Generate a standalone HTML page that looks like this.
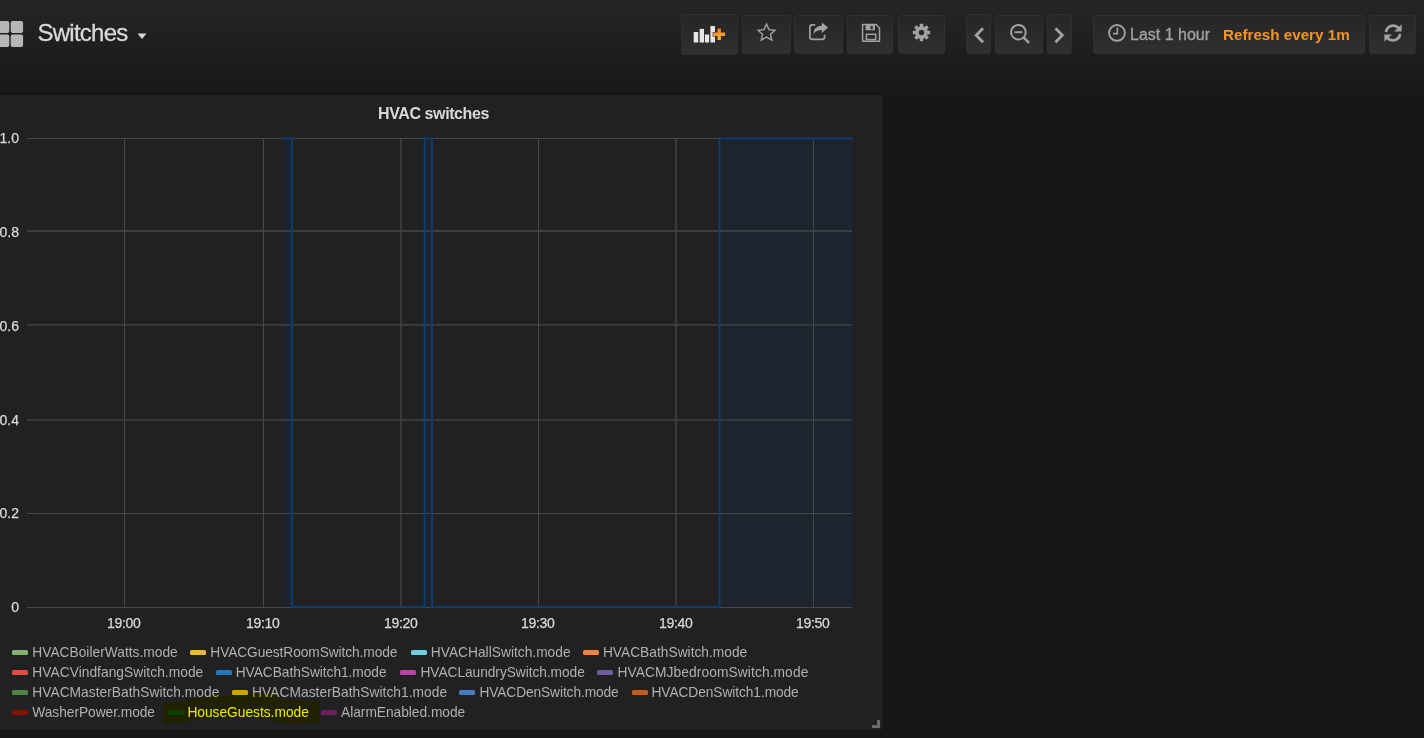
<!DOCTYPE html>
<html><head><meta charset="utf-8">
<style>
html,body{margin:0;padding:0}
body{width:1424px;height:738px;overflow:hidden;position:relative;font-family:"Liberation Sans",sans-serif;
background:linear-gradient(180deg,#222426 10px,rgb(22,23,25) 100px);}
.abs{position:absolute}
.btn{position:absolute;box-sizing:border-box;border-radius:3px;border:1px solid #2f2f32;
background:linear-gradient(to bottom,#262628,#303032);}
.t{position:absolute;white-space:nowrap;line-height:16px}
.panel{position:absolute;left:-10px;top:94px;width:894px;height:637px;box-sizing:border-box;background:#212124;
border:1px solid #141414;border-radius:3px}
.lg{position:absolute;white-space:nowrap;font-size:13.75px;line-height:16px;color:#b0b0b0}
.sw{position:absolute;width:16px;height:5px;border-radius:1.5px}
.yl{position:absolute;white-space:nowrap;line-height:16px;right:1405px;font-size:14px;color:#d8d9da;-webkit-text-stroke:0.25px #d8d9da}
.xl{position:absolute;white-space:nowrap;line-height:16px;top:614.5px;font-size:14px;letter-spacing:-0.3px;color:#d8d9da;-webkit-text-stroke:0.25px #d8d9da}
</style></head><body>
<svg class="abs" style="left:0;top:0" width="30" height="60">
  <rect x="-2" y="21" width="11.3" height="12" rx="2" fill="#b6b6b6"/>
  <rect x="10.7" y="21" width="12.4" height="12" rx="2" fill="#b6b6b6"/>
  <rect x="-2" y="34.5" width="11.3" height="12.6" rx="2" fill="#b6b6b6"/>
  <rect x="10.7" y="34.5" width="12.4" height="12.6" rx="2" fill="#b6b6b6"/>
</svg>
<div class="t" style="left:37.5px;top:20px;font-size:24px;letter-spacing:-0.75px;line-height:26px;color:#d8d9da;-webkit-text-stroke:0.3px #d8d9da">Switches</div>
<svg class="abs" style="left:136px;top:32px" width="12" height="8"><path d="M1.5 1.5 L10.5 1.5 L6 7 Z" fill="#d8d9da"/></svg>
<div class="btn" style="left:681px;top:14px;width:57px;height:41px"></div>
<div class="btn" style="left:742px;top:15px;width:49px;height:39px"></div>
<div class="btn" style="left:794px;top:15px;width:49px;height:39px"></div>
<div class="btn" style="left:847px;top:15px;width:46px;height:39px"></div>
<div class="btn" style="left:898px;top:15px;width:47px;height:39px"></div>
<div class="btn" style="left:966px;top:14px;width:25px;height:40px"></div>
<div class="btn" style="left:995px;top:15px;width:48px;height:39px"></div>
<div class="btn" style="left:1047px;top:14px;width:25px;height:40px"></div>
<div class="btn" style="left:1093px;top:15px;width:272px;height:39px"></div>
<div class="btn" style="left:1369px;top:15px;width:47px;height:39px"></div>
<svg class="abs" style="left:690px;top:22px" width="40" height="24">
  <rect x="3.7" y="10" width="4.5" height="10.5" fill="#e6e6e6"/>
  <rect x="9.7" y="6.9" width="4.3" height="13.6" fill="#e6e6e6"/>
  <rect x="14.9" y="12.5" width="4.2" height="8" fill="#e6e6e6"/>
  <rect x="20.4" y="4.1" width="4.6" height="16.4" fill="#e6e6e6"/>
  <defs><linearGradient id="og" x1="0" y1="0" x2="0" y2="1"><stop offset="0" stop-color="#f57a22"/><stop offset="1" stop-color="#fbb81b"/></linearGradient></defs>
  <path d="M23.3 10.6 h4.2 v-4 h3.4 v4 h4.2 v3.4 h-4.2 v4 h-3.4 v-4 h-4.2 z" fill="url(#og)" stroke="#27272a" stroke-width="1.2" paint-order="stroke"/>
</svg>
<svg class="abs" style="left:756px;top:23px" width="21" height="20" viewBox="0 0 21 20">
  <path d="M10.50 1.10 L12.96 6.62 L18.96 7.25 L14.48 11.29 L15.73 17.20 L10.50 14.18 L5.27 17.20 L6.52 11.29 L2.04 7.25 L8.04 6.62 Z" fill="none" stroke="#a2a2a2" stroke-width="1.4" stroke-linejoin="miter"/>
</svg>
<svg class="abs" style="left:808px;top:22px" width="22" height="20" viewBox="0 0 22 20">
  <path d="M7.2 2.8 H4.3 Q1.9 2.8 1.9 5.2 V15.1 Q1.9 17.4 4.3 17.4 H14.2 Q16.6 17.4 16.6 15.1 V12.8" fill="none" stroke="#a2a2a2" stroke-width="1.7"/>
  <path d="M5.6 14.6 Q5.3 7.8 13.8 7.9 V11 L20.2 5.6 L13.8 0.4 V3.5 Q4.8 4 5.6 14.6 Z" fill="#a2a2a2"/>
</svg>
<svg class="abs" style="left:860.7px;top:23px" width="20" height="20" viewBox="0 0 20 20">
  <path d="M2.1 1.5 H15 L18.5 5 V17.7 Q18.5 18.2 18 18.2 H2.1 Q1.6 18.2 1.6 17.7 V2 Q1.6 1.5 2.1 1.5 Z" fill="none" stroke="#a2a2a2" stroke-width="1.5"/>
  <rect x="4.6" y="1.5" width="9.4" height="5.8" fill="#a2a2a2"/>
  <rect x="9.6" y="2.9" width="2.1" height="3.4" fill="#29292b"/>
  <rect x="5.4" y="11.3" width="9.3" height="5.3" fill="none" stroke="#a2a2a2" stroke-width="1.5"/>
</svg>
<svg class="abs" style="left:912px;top:23px" width="19" height="19" viewBox="0 0 19 19">
  <g transform="translate(9.5 9.5)" fill="#a2a2a2">
    <rect x="-1.8" y="-8.7" width="3.6" height="17.4" rx="0.8"/>
    <rect x="-1.8" y="-8.7" width="3.6" height="17.4" rx="0.8" transform="rotate(45)"/>
    <rect x="-1.8" y="-8.7" width="3.6" height="17.4" rx="0.8" transform="rotate(90)"/>
    <rect x="-1.8" y="-8.7" width="3.6" height="17.4" rx="0.8" transform="rotate(135)"/>
    <circle r="6.3"/>
    <circle r="2.7" fill="#2a2a2c"/>
  </g>
</svg>
<svg class="abs" style="left:970px;top:24px" width="18" height="22"><path d="M13 4.2 L6.2 11.2 L13 18.2" fill="none" stroke="#a2a2a2" stroke-width="2.8"/></svg>
<svg class="abs" style="left:1051px;top:24px" width="18" height="22"><path d="M4.5 4.2 L11.3 11.2 L4.5 18.2" fill="none" stroke="#a2a2a2" stroke-width="2.8"/></svg>
<svg class="abs" style="left:1007.6px;top:22px" width="24" height="24" viewBox="0 0 24 24">
  <circle cx="10.4" cy="10.2" r="7.3" fill="none" stroke="#a2a2a2" stroke-width="2"/>
  <line x1="15.6" y1="15.4" x2="21" y2="20.8" stroke="#a2a2a2" stroke-width="2.6"/>
  <rect x="6.5" y="9.2" width="7.8" height="2" fill="#a2a2a2"/>
</svg>
<svg class="abs" style="left:1106px;top:22px" width="22" height="22" viewBox="0 0 22 22">
  <circle cx="11" cy="10.9" r="7.9" fill="none" stroke="#a2a2a2" stroke-width="1.9"/>
  <path d="M11.4 5.5 V11.6 H7" fill="none" stroke="#a2a2a2" stroke-width="1.6"/>
</svg>
<div class="t" style="left:1130px;top:27px;font-size:16px;color:#a2a2a2;-webkit-text-stroke:0.3px #a2a2a2">Last 1 hour</div>
<div class="t" style="left:1223px;top:26.5px;font-size:15.2px;font-weight:bold;color:#f7941f">Refresh every 1m</div>
<svg class="abs" style="left:1382px;top:22px" width="22" height="22" viewBox="0 0 22 22">
  <path d="M4 10 A7.2 7.2 0 0 1 16.5 6" fill="none" stroke="#a2a2a2" stroke-width="2.7"/>
  <path d="M19.6 2.2 V9.6 H12.2 Z" fill="#a2a2a2"/>
  <path d="M18 12 A7.2 7.2 0 0 1 5.5 16" fill="none" stroke="#a2a2a2" stroke-width="2.7"/>
  <path d="M2.4 19.8 V12.4 H9.8 Z" fill="#a2a2a2"/>
</svg>
<div class="panel"></div>
<div class="t" style="left:378px;top:105.5px;font-size:16px;letter-spacing:-0.4px;font-weight:bold;color:#d8d9da">HVAC switches</div>
<svg class="abs" style="left:0;top:0" width="900" height="738">
<g stroke="#48484a" fill="none">
<line x1="27" y1="138.5" x2="852" y2="138.5" stroke-width="1"/>
<line x1="27" y1="231.0" x2="852" y2="231.0" stroke-width="1.3"/>
<line x1="27" y1="324.9" x2="852" y2="324.9" stroke-width="1.3"/>
<line x1="27" y1="419.8" x2="852" y2="419.8" stroke-width="1.3"/>
<line x1="27" y1="513.5" x2="852" y2="513.5" stroke-width="1"/>
<line x1="27" y1="607.5" x2="852" y2="607.5" stroke-width="1"/>
<line x1="124.5" y1="138" x2="124.5" y2="608" stroke-width="1"/>
<line x1="263.5" y1="138" x2="263.5" y2="608" stroke-width="1"/>
<line x1="401.0" y1="138" x2="401.0" y2="608" stroke-width="1.3"/>
<line x1="538.5" y1="138" x2="538.5" y2="608" stroke-width="1"/>
<line x1="676.0" y1="138" x2="676.0" y2="608" stroke-width="1.3"/>
<line x1="813.5" y1="138" x2="813.5" y2="608" stroke-width="1"/>
</g>
<path d="M282 138.3 H292 V607 H424.5 V138.3 H432 V607 H719.5 V138.3 H853 V607 H282 Z" fill="rgba(10,67,124,0.1)"/>
<path d="M282 138.3 H292 V607 H424.5 V138.3 H432 V607 H719.5 V138.3 H853" fill="none" stroke="#0c3f74" stroke-width="1.8"/>
</svg>
<div class="yl" style="top:130px">1.0</div>
<div class="yl" style="top:224px">0.8</div>
<div class="yl" style="top:318px">0.6</div>
<div class="yl" style="top:412px">0.4</div>
<div class="yl" style="top:505px">0.2</div>
<div class="yl" style="top:599px">0</div>
<div class="xl" style="left:107px">19:00</div>
<div class="xl" style="left:246px">19:10</div>
<div class="xl" style="left:384px">19:20</div>
<div class="xl" style="left:521px">19:30</div>
<div class="xl" style="left:659px">19:40</div>
<div class="xl" style="left:796px">19:50</div>
<div class="sw" style="left:12px;top:650px;background:#7EB26D"></div><div class="lg" style="left:32.3px;top:645px;letter-spacing:0.011px">HVACBoilerWatts.mode</div>
<div class="sw" style="left:190px;top:650px;background:#EAB839"></div><div class="lg" style="left:210.3px;top:645px;letter-spacing:-0.091px">HVACGuestRoomSwitch.mode</div>
<div class="sw" style="left:410.6px;top:650px;background:#6ED0E0"></div><div class="lg" style="left:430.8px;top:645px;letter-spacing:0.011px">HVACHallSwitch.mode</div>
<div class="sw" style="left:582.7px;top:650px;background:#EF843C"></div><div class="lg" style="left:602.9px;top:645px;letter-spacing:0.011px">HVACBathSwitch.mode</div>
<div class="sw" style="left:12px;top:670px;background:#E24D42"></div><div class="lg" style="left:32.3px;top:665px;letter-spacing:0.045px">HVACVindfangSwitch.mode</div>
<div class="sw" style="left:216.1px;top:670px;background:#1F78C1"></div><div class="lg" style="left:235.7px;top:665px;letter-spacing:-0.047px">HVACBathSwitch1.mode</div>
<div class="sw" style="left:399.6px;top:670px;background:#BA43A9"></div><div class="lg" style="left:420.5px;top:665px;letter-spacing:-0.062px">HVACLaundrySwitch.mode</div>
<div class="sw" style="left:596.9px;top:670px;background:#705DA0"></div><div class="lg" style="left:617.4px;top:665px;letter-spacing:0.104px">HVACMJbedroomSwitch.mode</div>
<div class="sw" style="left:12px;top:690px;background:#508642"></div><div class="lg" style="left:32.3px;top:685px;letter-spacing:0.033px">HVACMasterBathSwitch.mode</div>
<div class="sw" style="left:231.5px;top:690px;background:#CCA300"></div><div class="lg" style="left:252.1px;top:685px;letter-spacing:0.048px">HVACMasterBathSwitch1.mode</div>
<div class="sw" style="left:459.3px;top:690px;background:#447EBC"></div><div class="lg" style="left:479.4px;top:685px;letter-spacing:-0.106px">HVACDenSwitch.mode</div>
<div class="sw" style="left:631.5px;top:690px;background:#C15C17"></div><div class="lg" style="left:651.5px;top:685px;letter-spacing:-0.083px">HVACDenSwitch1.mode</div>
<div class="sw" style="left:12px;top:710px;background:#890F02"></div><div class="lg" style="left:32.3px;top:705px;letter-spacing:-0.040px">WasherPower.mode</div>
<div class="sw" style="left:168px;top:710px;background:#0A437C"></div><div class="lg" style="left:187.4px;top:705px;letter-spacing:-0.007px;color:#ebebeb">HouseGuests.mode</div>
<div class="sw" style="left:321.2px;top:710px;background:#6D1F62"></div><div class="lg" style="left:341.1px;top:705px;letter-spacing:-0.031px">AlarmEnabled.mode</div>
<svg class="abs" style="left:0;top:0;mix-blend-mode:multiply" width="400" height="738">
  <path d="M163 703 L172 703 L172 702 L184 701 L186 700 L192 699 L200 698 L210 697 L218 696 L230 695 L240 694 L277 694 L277 699 L292 700 L309 701 L320 701 L320 723 L292 723.5 L280 722 L270 721 L262 719 L256 718 L240 717 L207 718 L196 720 L184 722 L172 723 L163 724 Z" fill="#ffff00"/>
</svg>
<svg class="abs" style="left:870px;top:718px" width="12" height="12"><path d="M2 7 H7 V2 H10 V10 H2 Z" fill="#6b6b6b"/></svg>
</body></html>
